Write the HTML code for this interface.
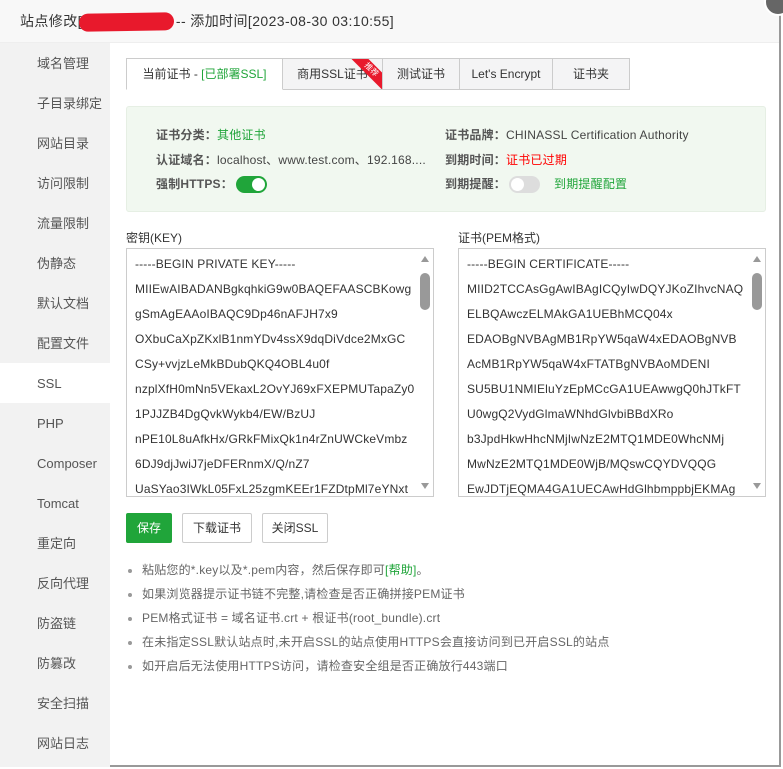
<!DOCTYPE html>
<html><head><meta charset="utf-8"><style>
*{box-sizing:border-box;margin:0;padding:0}
body{width:783px;height:769px;background:#fff;font-family:"Liberation Sans","Noto Sans CJK SC",sans-serif;font-size:12px;color:#333;position:relative;overflow:hidden}
.dlg{position:absolute;left:0;top:0;width:781px;height:767px;background:#fff;border-right:2px solid #999;border-bottom:2px solid #999}
.title{position:absolute;left:0;top:0;width:779px;height:43px;background:#f8f8f8;border-bottom:1px solid #eee;font-size:14px;line-height:43px;padding-left:20px;color:#333;letter-spacing:0.4px}
.red{display:inline-block;width:95px;height:18px;background:#e8192c;border-radius:9px;vertical-align:middle;margin:0 2px 0 -3px;transform:rotate(-1deg)}
.close{position:absolute;left:764px;top:-12px;width:28px;height:28px;border-radius:50%;background:#666;border:2px solid #fff}
.side{position:absolute;left:0;top:43px;width:110px;height:724px;background:#f2f2f2}
.side div{height:40px;line-height:41px;padding-left:37px;font-size:13px;color:#555}
.side .on{background:#fff}
.tabs{position:absolute;left:126px;top:58px;height:32px;display:flex}
.tabs div{height:32px;line-height:31px;border:1px solid #ccc;border-left:none;background:#f4f4f5;padding:0 0;text-align:center;font-size:12px;color:#333;position:relative;overflow:hidden}
.tabs div.a{background:#fff;border-left:1px solid #ccc;border-bottom-color:#fff}
.g{color:#20a53a}
.box{position:absolute;left:126px;top:106px;width:640px;height:106px;background:#f1f8f0;border:1px solid #e6efe4;border-radius:3px}
.r{position:absolute;font-size:12px;color:#444;white-space:nowrap;letter-spacing:0.2px}
.r b{font-weight:bold;color:#555}
.tg{display:inline-block;width:31px;height:17px;border-radius:9px;vertical-align:middle;position:relative;margin-left:3px}
.tg i{position:absolute;top:2px;width:13px;height:13px;border-radius:50%;background:#fff}
.lbl{position:absolute;top:229px;font-size:12px;color:#333}
.ta{position:absolute;top:248px;width:308px;height:249px;border:1px solid #ccc;background:#fff;overflow:hidden}
.ta p{height:25px;line-height:25px;padding-left:8px;font-size:12px;color:#333;white-space:nowrap;letter-spacing:0.15px}
.ta .sb{position:absolute;right:3px;top:24px;width:10px;height:37px;background:#999;border-radius:5px}
.ta .up{position:absolute;right:4px;top:7px;width:0;height:0;border-left:4px solid transparent;border-right:4px solid transparent;border-bottom:6px solid #999}
.ta .dn{position:absolute;right:4px;bottom:7px;width:0;height:0;border-left:4px solid transparent;border-right:4px solid transparent;border-top:6px solid #999}
.btn{position:absolute;top:513px;height:30px;line-height:28px;text-align:center;border:1px solid #ccc;border-radius:2px;font-size:12px;color:#333;background:#fff}
ul{position:absolute;left:128px;top:560px;list-style:none}
ul li{height:24px;line-height:20px;color:#666;font-size:12px;white-space:nowrap;letter-spacing:0.2px}
ul li:before{content:"";display:inline-block;width:4px;height:4px;border-radius:50%;background:#999;margin-right:10px;vertical-align:middle}
</style></head><body>
<div class="dlg">
<div class="title">站点修改[<span class="red"></span>-- 添加时间[2023-08-30 03:10:55]</div>
<div class="close"></div>
<div class="side">
<div>域名管理</div><div>子目录绑定</div><div>网站目录</div><div>访问限制</div><div>流量限制</div><div>伪静态</div><div>默认文档</div><div>配置文件</div><div class="on">SSL</div><div>PHP</div><div>Composer</div><div>Tomcat</div><div>重定向</div><div>反向代理</div><div>防盗链</div><div>防篡改</div><div>安全扫描</div><div>网站日志</div>
</div>
<div class="tabs">
<div class="a" style="width:157px">当前证书 - <span class="g">[已部署SSL]</span></div>
<div style="width:100px">商用SSL证书<span style="position:absolute;right:-14px;top:5px;width:50px;height:12px;background:#e8192c;transform:rotate(45deg);color:#fff;font-size:8px;line-height:12px">推荐</span></div>
<div style="width:77px">测试证书</div>
<div style="width:93px">Let's Encrypt</div>
<div style="width:77px">证书夹</div>
</div>
<div class="box"></div>
<div class="r" style="left:156px;top:126px"><b>证书分类：</b><span class="g">其他证书</span></div>
<div class="r" style="left:156px;top:151px"><b>认证域名：</b>localhost、www.test.com、192.168....</div>
<div class="r" style="left:156px;top:175px"><b>强制HTTPS：</b><span class="tg" style="background:#20a53a"><i style="right:2px"></i></span></div>
<div class="r" style="left:445px;top:126px"><b>证书品牌：</b>CHINASSL Certification Authority</div>
<div class="r" style="left:445px;top:151px"><b>到期时间：</b><span style="color:#f00">证书已过期</span></div>
<div class="r" style="left:445px;top:175px"><b>到期提醒：</b><span class="tg" style="background:#ddd"><i style="left:2px"></i></span><span class="g" style="margin-left:14px">到期提醒配置</span></div>
<div class="lbl" style="left:126px">密钥(KEY)</div>
<div class="lbl" style="left:458px">证书(PEM格式)</div>
<div class="ta" style="left:126px"><div style="height:3px"></div>
<p>-----BEGIN PRIVATE KEY-----</p><p>MIIEwAIBADANBgkqhkiG9w0BAQEFAASCBKowg</p><p>gSmAgEAAoIBAQC9Dp46nAFJH7x9</p><p>OXbuCaXpZKxlB1nmYDv4ssX9dqDiVdce2MxGC</p><p>CSy+vvjzLeMkBDubQKQ4OBL4u0f</p><p>nzplXfH0mNn5VEkaxL2OvYJ69xFXEPMUTapaZy0</p><p>1PJJZB4DgQvkWykb4/EW/BzUJ</p><p>nPE10L8uAfkHx/GRkFMixQk1n4rZnUWCkeVmbz</p><p>6DJ9djJwiJ7jeDFERnmX/Q/nZ7</p><p>UaSYao3IWkL05FxL25zgmKEEr1FZDtpMl7eYNxt</p>
<span class="up"></span><span class="sb"></span><span class="dn"></span></div>
<div class="ta" style="left:458px"><div style="height:3px"></div>
<p>-----BEGIN CERTIFICATE-----</p><p>MIID2TCCAsGgAwIBAgICQyIwDQYJKoZIhvcNAQ</p><p>ELBQAwczELMAkGA1UEBhMCQ04x</p><p>EDAOBgNVBAgMB1RpYW5qaW4xEDAOBgNVB</p><p>AcMB1RpYW5qaW4xFTATBgNVBAoMDENI</p><p>SU5BU1NMIEluYzEpMCcGA1UEAwwgQ0hJTkFT</p><p>U0wgQ2VydGlmaWNhdGlvbiBBdXRo</p><p>b3JpdHkwHhcNMjIwNzE2MTQ1MDE0WhcNMj</p><p>MwNzE2MTQ1MDE0WjB/MQswCQYDVQQG</p><p>EwJDTjEQMA4GA1UECAwHdGlhbmppbjEKMAg</p>
<span class="up"></span><span class="sb"></span><span class="dn"></span></div>
<div class="btn" style="left:126px;width:46px;background:#20a53a;border-color:#20a53a;color:#fff">保存</div>
<div class="btn" style="left:182px;width:70px">下载证书</div>
<div class="btn" style="left:262px;width:66px">关闭SSL</div>
<ul>
<li>粘贴您的*.key以及*.pem内容，然后保存即可<span class="g">[帮助]</span>。</li>
<li>如果浏览器提示证书链不完整,请检查是否正确拼接PEM证书</li>
<li>PEM格式证书 = 域名证书.crt + 根证书(root_bundle).crt</li>
<li>在未指定SSL默认站点时,未开启SSL的站点使用HTTPS会直接访问到已开启SSL的站点</li>
<li>如开启后无法使用HTTPS访问，请检查安全组是否正确放行443端口</li>
</ul>
</div>
</body></html>
